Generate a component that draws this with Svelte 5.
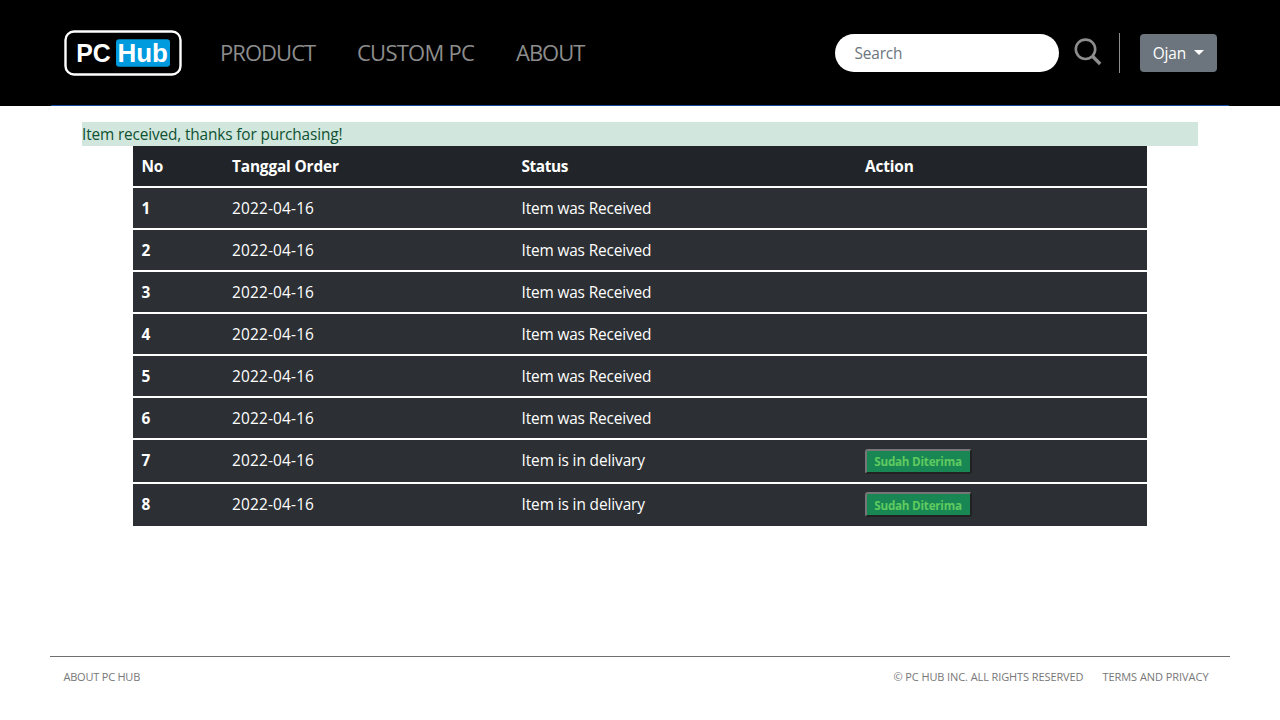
<script>
  const nav = [
    { label: 'PRODUCT', cls: 'product' },
    { label: 'CUSTOM PC', cls: 'custom' },
    { label: 'ABOUT', cls: 'about' },
  ];
  const orders = Array.from({ length: 8 }, (_, i) => ({
    no: i + 1,
    date: '2022-04-16',
    delivered: i < 6,
  }));
</script>

<div class="page">
  <header>
    <div class="bar">
      <svg class="logo" width="118" height="46" viewBox="0 0 118 46">
        <rect x="1.5" y="1.5" width="115" height="43" rx="8.5" fill="#000" stroke="#fff" stroke-width="2.4" />
        <rect x="52" y="9.3" width="54" height="27.4" rx="3" fill="#009ade" />
        <text x="12.2" y="32" textLength="34.5" lengthAdjust="spacingAndGlyphs">PC</text>
        <text x="53.4" y="32" textLength="50.5" lengthAdjust="spacingAndGlyphs">Hub</text>
      </svg>
      <nav>
        {#each nav as item}
          <span class={item.cls}>{item.label}</span>
        {/each}
      </nav>
      <div class="search">Search</div>
      <svg class="glass" width="28" height="28" viewBox="0 0 28 28" fill="none" stroke="#8d8d8d">
        <circle cx="11.5" cy="11.3" r="9.7" stroke-width="2.6" />
        <path d="M18.5 18.3L26.2 26" stroke-width="3.4" />
      </svg>
      <div class="divider"></div>
      <div class="user"><span>Ojan</span><i></i></div>
    </div>
  </header>

  <main>
    <div class="alert">Item received, thanks for purchasing!</div>
    <div class="table">
      <div class="row head">
        <b>No</b><b>Tanggal Order</b><b class="status-head">Status</b><b>Action</b>
      </div>
      {#each orders as o}
        <div class="row" class:tall={!o.delivered}>
          <b>{o.no}</b>
          <span class="date">{o.date}</span>
          {#if o.delivered}
            <span>Item was Received</span>
          {:else}
            <span class="shipping">Item is in delivary</span>
            <div><button>Sudah Diterima</button></div>
          {/if}
        </div>
      {/each}
    </div>
  </main>

  <footer>
    <span class="f1">ABOUT PC HUB</span>
    <span class="f2">© PC HUB INC. ALL RIGHTS RESERVED</span>
    <span class="f3">TERMS AND PRIVACY</span>
  </footer>
</div>

<style>
  :global(body) { background: #fff; }
  .page {
    height: 720px;
    overflow: hidden;
    display: flex;
    flex-direction: column;
    font: 15.4px/24px 'Open Sans', sans-serif;
    letter-spacing: -0.15px;
    white-space: nowrap;
  }
  header { height: 106px; background: #000; flex: none; }
  .bar {
    box-sizing: border-box;
    height: 106px;
    margin: 0 51px;
    padding: 0 12px 0 13px;
    border-bottom: 1px solid #134aa0;
    display: flex;
    align-items: center;
  }
  .logo { margin-top: 1px; flex: none; letter-spacing: 0; }
  .logo text { font: bold 26px 'Liberation Sans', sans-serif; fill: #fff; }
  nav { display: flex; margin: -2px 0 0 38px; color: #8d8d8d; font-size: 22px; }
  nav span { flex: none; }
  .product { width: 137px; letter-spacing: -0.95px; }
  .custom { width: 159px; letter-spacing: -0.75px; }
  .about { width: 100px; letter-spacing: -1px; }
  .search {
    box-sizing: border-box;
    width: 224px;
    height: 38px;
    margin-left: auto;
    padding: 8px 19.5px 6px;
    border-radius: 19px;
    background: #fff;
    color: #6c757d;
  }
  .glass { margin: -2px 0 0 15px; flex: none; }
  .divider { width: 1px; height: 40px; margin-left: 17px; background: #8d8d8d; }
  .user {
    box-sizing: border-box;
    width: 77px;
    height: 38px;
    margin-left: 20px;
    padding: 2px 13px 0 12.7px;
    border-radius: 4px;
    background: #6c757d;
    color: #fff;
    display: flex;
    align-items: center;
    justify-content: space-between;
  }
  .user i { border: 5px solid transparent; border-top-color: #fff; border-bottom: 0; margin-top: -3px; }
  main { padding: 16px 82px 0; flex: 1; }
  .alert { box-sizing: border-box; height: 24px; padding-top: 1px; background: #d1e7dd; color: #0f5132; }
  .table { width: 1014px; margin: 0 auto; color: #fff; }
  .row {
    box-sizing: border-box;
    height: 42px;
    padding: 9px 9px 0 8.5px;
    border-top: 2px solid #fff;
    background: #2c3034;
    display: grid;
    grid-template-columns: 90.5px 289.5px 343.5px 1fr;
    align-items: start;
  }
  .row.head { height: 40px; border-top: 0; background: #212529; }
  .row.tall { height: 44px; }
  .date { letter-spacing: 0.18px; }
  .shipping { letter-spacing: -0.1px; }
  .status-head { letter-spacing: -0.4px; }
  button {
    box-sizing: border-box;
    display: block;
    width: 107px;
    height: 25px;
    padding: 0 1px 0 0;
    border: 2px solid;
    border-color: #767676 #212121 #212121 #767676;
    border-radius: 3px;
    background: #198754;
    color: #5fca5f;
    font: bold 11.7px/21px 'Open Sans', sans-serif;
    letter-spacing: -0.25px;
  }
  .row:last-child button { margin-top: -1px; padding-top: 1px; }
  footer {
    box-sizing: border-box;
    height: 64px;
    margin: 0 50px;
    padding: 10px 21.5px 0 13.5px;
    border-top: 1px solid #6f6f6f;
    color: #777;
    font-size: 11px;
    line-height: 20px;
    display: flex;
  }
  .f1 { letter-spacing: -0.22px; }
  .f2 { margin-left: auto; margin-right: 19px; letter-spacing: -0.1px; }
  .f3 { letter-spacing: -0.05px; }
</style>
